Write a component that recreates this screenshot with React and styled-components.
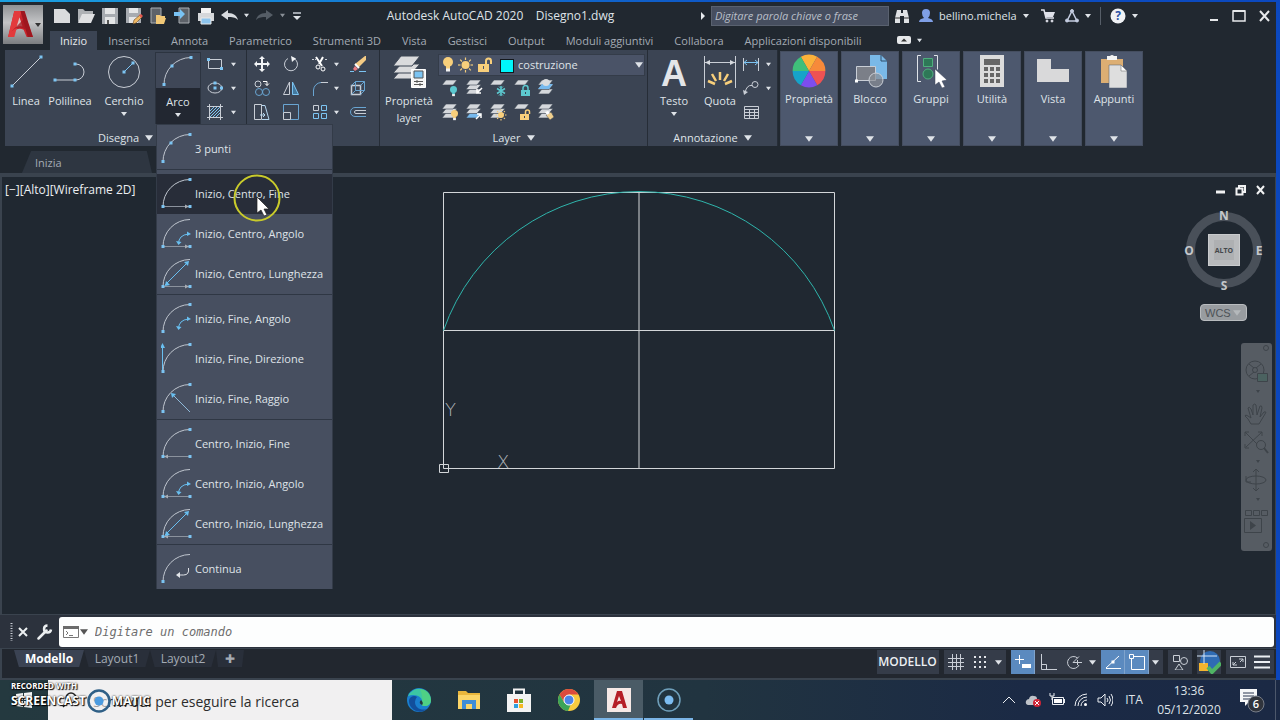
import React from 'react';
import styled, { createGlobalStyle, css, ThemeProvider } from 'styled-components';

const theme = {
  windowColor: '#212830',
  canvasColor: '#202831',
  panelColor: '#3b4453',
  collapsedColor: '#4d586e',
  menuColor: '#474f60',
  darkColor: '#222731',
  textColor: '#dfe3e8',
  mutedColor: '#a4abb4',
  lineColor: '#3a434e',
  accentColor: '#5b8abf',
};

const GlobalStyle = createGlobalStyle`
  * {
    box-sizing: border-box;
  }

  body {
    margin: 0;
    background: #212830;
    color: #dfe3e8;
    font-family: 'Open Sans', 'Noto Sans', sans-serif;
    font-size: 11px;
    line-height: 16px;
  }

  button, input, select {
    margin: 0;
    padding: 0;
    border: 0;
    background: none;
    color: inherit;
    font: inherit;
  }

  svg {
    display: block;
    flex: none;
  }
`;

const Screen = styled.div`
  display: flex;
  flex-direction: column;
  min-height: 100vh;
`;

const AppWindow = styled.div`
  display: flex;
  flex: 1;
  flex-direction: column;
  border-top: 2px solid #1689d4;
  border-right: 4px solid #0b46bd;
  border-image: linear-gradient(100deg, #1ba0e0, #0d52c4 55%, #0b46bd) 2 4 0 0;
  background: ${props => props.theme.windowColor};
`;

/* Header */

const Header = styled.header`
  display: grid;
  grid-template-columns: 40px 1fr;
  grid-template-rows: 29px 19px;
  column-gap: 7px;
  padding-left: 3px;
`;

const LogoButton = styled.button`
  display: flex;
  grid-row: 1 / 3;
  align-items: center;
  height: 39px;
  margin-top: 3px;
  padding-left: 3px;
  background: linear-gradient(#8f9194, #c3c4c6 45%, #7b7d80);
`;

const TitleBar = styled.div`
  display: flex;
  align-items: center;
  height: 27px;
`;

const Slot = styled.button`
  display: flex;
  flex: none;
  align-items: center;
  justify-content: center;
  width: ${props => props.$w || 24}px;
  height: 22px;
  color: ${props => props.theme.textColor};
`;

const Title = styled.h1`
  flex: 1;
  margin: 0;
  font-size: 12px;
  font-weight: 400;
  text-align: center;
  white-space: pre;
`;

const HelpSearch = styled.input`
  width: 178px;
  height: 20px;
  padding: 0 3px;
  border: 1px solid #59616f;
  background: #464e5f;

  &::placeholder {
    color: #b9bfc8;
    font-style: italic;
    opacity: 1;
  }
`;

const UserName = styled.span`
  flex: none;
  width: 80px;
  margin-left: 2px;
  white-space: nowrap;
`;

const Divider = styled.span`
  width: 1px;
  height: 18px;
  margin: 0 5px;
  background: #565e68;
`;

const WindowButtons = styled.div`
  display: flex;
  margin-left: 61px;
`;

const RibbonTabs = styled.nav`
  display: flex;
  align-items: stretch;
  gap: 1px;
`;

const RibbonTab = styled.button`
  padding: 0 10px;
  color: ${props => (props.$active ? '#e8ebee' : props.theme.mutedColor)};
  background: ${props => (props.$active ? props.theme.panelColor : 'none')};
  white-space: nowrap;
`;

const RibbonToggle = styled.div`
  display: flex;
  align-items: center;
  margin-left: 18px;
`;

/* Ribbon */

const Ribbon = styled.div`
  display: flex;
  height: 96px;
  padding-left: 5px;
`;

const Panel = styled.section`
  display: flex;
  flex-direction: column;
  justify-content: space-between;
  width: ${props => props.$w}px;
  border-right: 1px solid #262d37;
  background: ${props => props.theme.panelColor};
`;

const PanelBody = styled.div`
  display: flex;
  align-items: flex-start;
  padding-top: 2px;
`;

const PanelTitle = styled.button`
  display: flex;
  align-items: center;
  justify-content: center;
  gap: 6px;
  height: 16px;
`;

const largeButton = css`
  display: flex;
  flex-direction: column;
  align-items: center;
  padding-top: 2px;
`;

const LargeButton = styled.button`
  ${largeButton}
  width: ${props => props.$w}px;
  height: 72px;
  ${props =>
    props.$open &&
    css`
      border: 1px solid #2c3440;
      border-bottom: 0;
      background: linear-gradient(#3f4757 35px, ${props.theme.darkColor} 35px);
    `}
`;

const LargeIcon = styled.span`
  display: flex;
  align-items: center;
  justify-content: center;
  width: 36px;
  height: 34px;
`;

const LargeLabel = styled.span`
  margin: 4px 0 2px;
  line-height: 17px;
  white-space: pre-line;
`;

const MenuAnchor = styled.div`
  position: relative;
`;

const SmallTools = styled.div`
  display: grid;
  grid-template-columns: ${props => props.$columns};
  grid-auto-rows: 24px;
  padding-left: ${props => props.$pad || 0}px;
`;

const SmallButton = styled.button`
  display: flex;
  align-items: center;
  justify-content: center;
`;

const LayerTools = styled.div`
  flex: 1;
  padding: 2px 2px 0 0;
`;

const LayerSelect = styled.label`
  display: flex;
  align-items: center;
  gap: 3px;
  height: 22px;
  padding: 0 1px 0 3px;
  border: 1px solid #343c49;
  background: #4a5367;
`;

const LayerField = styled.select`
  flex: 1;
  min-width: 0;
  appearance: none;
`;

const Swatch = styled.span`
  width: 14px;
  height: 14px;
  margin: 2px 1px 0 4px;
  border: 1px solid #14181d;
  background: #00f6fa;
`;

const CollapsedPanels = styled.div`
  display: flex;
  gap: 3px;
  padding: 1px 0 0 2px;
`;

const CollapsedPanel = styled.button`
  ${largeButton}
  width: 58px;
  height: 95px;
  border: 1px solid #454e60;
  background: ${props => props.theme.collapsedColor};

  ${LargeLabel} {
    flex: 1;
    margin: 2px 0;
  }

  & > svg:last-child {
    margin-bottom: 2px;
  }
`;

/* Arc menu */

const Menu = styled.div`
  position: absolute;
  z-index: 5;
  top: 72px;
  left: 1px;
  width: 177px;
  padding-top: 4px;
  border: 1px solid #333b48;
  border-bottom: 0;
  background: ${props => props.theme.menuColor};
`;

const MenuGroup = styled.div`
  & + & {
    padding-top: 4px;
    border-top: 1px solid #2f3744;
  }
`;

const MenuItem = styled.button`
  position: relative;
  display: flex;
  align-items: center;
  gap: 2px;
  width: 100%;
  height: 40px;
  padding-left: 4px;
  background: ${props => (props.$hover ? '#282d39' : 'none')};
  white-space: nowrap;
`;

const Pointer = styled.span`
  position: absolute;
  top: -1px;
  left: 75px;
`;

/* Drawing area */

const FileTabs = styled.div`
  display: flex;
  align-items: flex-end;
  height: 31px;
  padding-left: 22px;
  border-bottom: 4px solid ${props => props.theme.lineColor};
`;

const FileTab = styled.button`
  width: 130px;
  height: 22px;
  padding: 2px 0 0 13px;
  background: #2e3641;
  clip-path: polygon(7% 0, 96% 0, 100% 100%, 0 100%);
  color: ${props => props.theme.mutedColor};
  text-align: left;
`;

const Canvas = styled.main`
  position: relative;
  flex: 1;
  min-height: 438px;
  border: solid ${props => props.theme.lineColor};
  border-width: 0 1px 1px 2px;
  background: ${props => props.theme.canvasColor};
`;

const ViewLabel = styled.div`
  padding: 5px 3px;
  color: #eceff1;
  font-size: 12px;
`;

const Drawing = styled.svg`
  position: absolute;
  top: 8px;
  left: 433px;
`;

const ViewControls = styled.div`
  position: absolute;
  top: 2px;
  right: 5px;
  display: flex;
`;

const ViewCube = styled.div`
  position: absolute;
  top: 30px;
  right: 11px;
`;

const WcsSelect = styled.button`
  position: absolute;
  top: 127px;
  right: 28px;
  display: flex;
  align-items: center;
  justify-content: space-between;
  width: 47px;
  height: 17px;
  padding: 0 5px 0 4px;
  border: 1px solid #b9bcbf;
  border-radius: 4px;
  background: #989ca0;
  color: #4d5257;
  font-family: 'Liberation Sans', sans-serif;
`;

const NavBar = styled.div`
  position: absolute;
  top: 166px;
  right: 3px;
  border-radius: 3px;
  background: #565c63;
`;

/* Command line and status */

const CommandBar = styled.div`
  display: flex;
  align-items: center;
  height: 33px;
  padding: 0 2px 0 10px;
  background: #2c323d;
`;

const CommandBox = styled.label`
  display: flex;
  flex: 1;
  align-items: center;
  height: 30px;
  margin-left: 2px;
  padding-left: 4px;
  border-radius: 3px;
  background: #fdfefe;
`;

const CommandInput = styled.input`
  flex: 1;
  height: 28px;
  margin-left: 6px;
  color: #333;
  font-family: 'DejaVu Sans Mono', monospace;
  font-size: 12px;
  outline: 0;

  &::placeholder {
    color: #6d6d6d;
    font-style: italic;
    opacity: 1;
  }
`;

const StatusBar = styled.footer`
  display: flex;
  justify-content: space-between;
  height: 32px;
  padding: 1px 2px 0 12px;
  border: solid ${props => props.theme.lineColor};
  border-width: 1px 0 2px 2px;
  background: #22272f;
  font-size: 12px;
`;

const LayoutTabs = styled.div`
  display: flex;
`;

const LayoutTab = styled.button`
  width: ${props => props.$w || 66}px;
  height: 17px;
  background: ${props => (props.$active ? '#3b4353' : '#292f3a')};
  clip-path: polygon(0 0, 100% 0, 93% 100%, 7% 100%);
  color: ${props => (props.$active ? '#fff' : props.theme.mutedColor)};
  font-weight: ${props => (props.$active ? 700 : 400)};
`;

const StatusTools = styled.div`
  display: flex;
  gap: 5px;
`;

const StatusGroup = styled.div`
  display: flex;
  height: 24px;
  background: #353c49;
`;

const StatusButton = styled.button`
  display: flex;
  align-items: center;
  justify-content: center;
  width: ${props => props.$w || 24}px;
  border-right: 1px solid ${props => (props.$on ? '#7fa3cc' : 'transparent')};
  background: ${props => (props.$on ? props.theme.accentColor : 'none')};
  color: #eceff3;
  font-weight: 600;
`;

/* Taskbar */

const Taskbar = styled.div`
  position: relative;
  display: flex;
  height: 40px;
  background: linear-gradient(90deg, #24393f, #213440 55%, #1b2a45 80%, #1b2944);
  font-size: 12px;
`;

const StartButton = styled.button`
  display: flex;
  align-items: center;
  justify-content: center;
  width: 48px;
`;

const TaskSearch = styled.label`
  display: flex;
  align-items: center;
  width: 344px;
  padding-left: 14px;
  background: #f1f0f1;
`;

const TaskSearchInput = styled.input`
  flex: 1;
  height: 36px;
  margin-left: 13px;
  padding-top: 2px;
  color: #222;
  font-size: 14px;

  &::placeholder {
    color: #2c2c2c;
    opacity: 1;
  }
`;

const TaskApps = styled.div`
  display: flex;
  flex: 1;
  gap: 1px;
  padding-left: 2px;
`;

const TaskApp = styled.button`
  display: flex;
  align-items: center;
  justify-content: center;
  width: 49px;
  border-bottom: 2px solid ${props => (props.$running ? '#7ab4e6' : 'transparent')};
  border-top: 2px solid transparent;
  background: ${props => (props.$active ? '#4a5b66' : 'none')};
`;

const Tray = styled.div`
  display: flex;
  align-items: center;
  padding-right: 4px;
`;

const Clock = styled.time`
  width: 76px;
  line-height: 19px;
  text-align: center;
`;

const DesktopEdge = styled.span`
  align-self: stretch;
  width: 1px;
  background: #4d586b;
`;

const Watermark = styled.div`
  position: absolute;
  top: 1px;
  left: 11px;
  color: #fff;
  font-size: 8px;
  font-weight: 700;
  line-height: 9px;
  text-shadow: 0 0 2px #000, 1px 1px 1px #000;
  pointer-events: none;
`;

const WatermarkBrand = styled.div`
  display: flex;
  align-items: center;
  height: 22px;
  font-size: 12px;
  line-height: 16px;
`;

/* Icons */

const Caret = ({ size = 6, color = '#dfe3e8' }) => (
  <svg width={size} height={size} viewBox="0 0 6 6">
    <path d="M0 1h6L3 5z" fill={color} />
  </svg>
);

const Icon = ({ s = 16, w, h, box, children, c = '#c9ced6' }) => (
  <svg
    width={w || s}
    height={h || s}
    viewBox={box || `0 0 ${w || s} ${h || s}`}
    fill="none"
    stroke={c}
    strokeWidth="1"
  >
    {children}
  </svg>
);

const Dots = ({ points, r = 1.5, fill = '#7cc4f2' }) =>
  points.map(([x, y]) => (
    <rect key={`${x}-${y}`} x={x - r} y={y - r} width={r * 2} height={r * 2} fill={fill} stroke="none" />
  ));

const AutocadMark = ({ size }) => (
  <svg width={size} height={size} viewBox="0 0 26 28">
    <path d="M1 26 7 1h9l9 25h-6l-3-7q-5-2-9 1l-1 6z" fill="#c9242c" />
    <path d="M7 1h7L7 26H1z" fill="#e33a3c" />
    <path d="M12 7 9 17q3-2 6-1z" fill="#dcc3c2" />
    <path d="M4 21 16 9l2 10Q11 14 4 21z" fill="#a3151d" opacity=".75" />
    <path d="M13 1h4l8 25h-5z" fill="#9e161e" />
  </svg>
);

const quick = {
  Nuovo: <path d="M1 2h11l5 5v9H1z" fill="#dadbdd" stroke="none" />,
  Apri: (
    <>
      <path d="M1 15V2h5l2 2h8v3" fill="#aeb1b5" stroke="none" />
      <path d="M1 16 5 7h13l-4 9z" fill="#dfe0e2" stroke="none" />
    </>
  ),
  Salva: (
    <>
      <path d="M1 1h16v16H1z" fill="#a7abb1" stroke="none" />
      <path d="M4 1h10v6H4zM4 10h10v7H4z" fill="#e4e5e7" stroke="none" />
      <path d="M6 13h2v4H6z" fill="#555" stroke="none" />
    </>
  ),
  'Salva con nome': (
    <>
      <path d="M1 1h15v15H1z" fill="#a7abb1" stroke="none" />
      <path d="M4 1h9v5H4zM4 10h9v6H4z" fill="#e4e5e7" stroke="none" />
      <path d="m8 17 1-4 6-5 2 2-6 6z" fill="#f0b964" stroke="#63411f" strokeWidth=".6" />
      <path d="m14 8 2-1 2 2-2 2z" fill="#e4574e" stroke="none" />
    </>
  ),
  'Apri da Web e dispositivi mobili': (
    <>
      <path d="M2 1h10v15H2z" fill="#5d6269" stroke="#a9adb2" />
      <path d="M7 17V8h4l1 1h4v2h1l-2 6z" fill="#f1c877" stroke="none" />
    </>
  ),
  'Salva in Web e dispositivi mobili': (
    <>
      <path d="M6 1h10v15H6z" fill="#5d6269" stroke="#a9adb2" />
      <path d="M1 5h6V2l5 5-5 5V9H1z" fill="#79c3f4" stroke="none" />
    </>
  ),
  Plot: (
    <>
      <path d="M4 1h10v5H4z" fill="#f2f2f2" stroke="none" />
      <path d="M1 6h16v8H1z" fill="#d5d7da" stroke="none" />
      <path d="M4 11h10v6H4z" fill="#8dc5ee" stroke="#e8e8e8" />
    </>
  ),
};

const UndoIcon = ({ flip, color }) => (
  <svg width="17" height="14" viewBox="0 0 17 14">
    <g transform={flip ? 'translate(17) scale(-1 1)' : undefined}>
      <path d="m0 6 7-5v3c6 0 9 3 10 7-3-3-6-3-10-3v3z" fill={color} />
    </g>
  </svg>
);

const LayerStack = ({ small, children, blue }) => (
  <Icon s={18}>
    <g fill="#d5d8dc" stroke="#3b4453" strokeWidth=".6">
      {!small && <path d="m1 15 4-5h11l-4 5z" fill={blue ? '#76b9ee' : undefined} />}
      {!small && <path d="m1 10.500 4-5h11l-4 5z" />}
      <path d="m1 6 4-5h11l-4 5z" />
    </g>
    {children}
  </Icon>
);

const Bulb = ({ x = 0, y = 0, color, s = 1 }) => (
  <g transform={`translate(${x} ${y}) scale(${s})`} stroke="none">
    <circle cx="5" cy="5" r="5" fill={color} />
    <path d="M3 9h4v3H3z" fill={color} />
    <path d="M3 11.500h4v3H3z" fill="#f3f3f3" />
  </g>
);

const Sun = ({ x = 8, y = 8, r = 4, rays = 7.5 }) => (
  <g stroke="#f4ce7c" strokeWidth="1.200">
    <circle cx={x} cy={y} r={r} fill="#f8cf7b" stroke="none" />
    {[0, 45, 90, 135, 180, 225, 270, 315].map(a => (
      <path key={a} d={`M${x + r + 1} ${y}H${x + rays}`} transform={`rotate(${a} ${x} ${y})`} />
    ))}
  </g>
);

const Lock = ({ x = 0, y = 0, color, open }) => (
  <g transform={`translate(${x} ${y})`}>
    <path d="M0 5h9v6H0z" fill={color} stroke="none" />
    <path
      d={open ? 'M5.500 5V3a2 2 0 0 1 4 0v2' : 'M2 5V3a2.500 2.500 0 0 1 5 0v2'}
      stroke={color}
      strokeWidth="1.500"
    />
    <path d="M4 7h1v2H4z" fill="#3b4453" stroke="none" />
  </g>
);

const layerIcons = [
  <LayerStack small>
    <Bulb x={9} y={7} s={0.7} color="#5cc8cf" />
  </LayerStack>,
  <LayerStack>
    <path d="m17 9-5 5m0-4v4h4" stroke="#fff" strokeWidth="1.500" />
  </LayerStack>,
  <LayerStack small>
    <path d="M12 7v10M8 9.500l8 5M16 9.500l-8 5" stroke="#5cc8cf" strokeWidth="1.500" />
    <path d="m10 7.500 2 2 2-2M10 16.500l2-2 2 2" stroke="#5cc8cf" />
  </LayerStack>,
  <LayerStack small>
    <Lock x={8} y={6} color="#5cc8cf" />
  </LayerStack>,
  <LayerStack>
    <path d="m1 10 4-5h11l-4 5z" fill="#76b9ee" stroke="none" />
    <circle cx="9" cy="3.500" r="3.500" fill="#dadcdf" stroke="none" />
  </LayerStack>,
  <LayerStack>
    <Bulb x={10} y={7} s={0.7} color="#f8cf7b" />
  </LayerStack>,
  <LayerStack blue>
    <path d="m11 16 5-5m-4 0h4v4" stroke="#fff" strokeWidth="1.500" />
  </LayerStack>,
  <LayerStack>
    <Sun x={12} y={12} r={3} rays={5.5} />
  </LayerStack>,
  <LayerStack small>
    <Lock x={7} y={6} color="#f8cf7b" open />
  </LayerStack>,
  <LayerStack>
    <path d="m9 12 5-3 3 5-4 3z" fill="#f1d08e" stroke="#3b4453" strokeWidth=".5" />
    <path d="m8 9 3-1 2 2-3 2z" fill="#fff" stroke="none" />
  </LayerStack>,
];

const drawIcons = [
  <Icon>
    <path d="M1.500 3.500h13v9h-13z" />
    <Dots points={[[1.5, 3.5], [14.5, 12.5]]} />
  </Icon>,
  <Icon>
    <ellipse cx="8" cy="8" rx="7" ry="5" />
    <Dots points={[[8, 8], [8, 3], [14.5, 8]]} />
  </Icon>,
  <Icon>
    <path d="M0 2.500h16M0 13.500h16M2.500 0v16M13.500 0v16" />
    <path d="m3 7 4-4M3 10l7-7M3 13l10-10M6 13l7-7M9 13l4-4" stroke="#7cc4f2" />
  </Icon>,
];

const modifyIcons = [
  <Icon c="#f2f4f6">
    <path d="M8 2v12M2 8h12" strokeWidth="2" />
    <path d="m8 0 3 3H5zM8 16l-3-3h6zM0 8l3-3v6zM16 8l-3 3V5z" fill="#f2f4f6" stroke="none" />
  </Icon>,
  <Icon>
    <path d="M5 2.500A6.500 6.500 0 1 0 11 2.500" />
    <path d="m8 0 5 2.500L9 6z" fill="#f2f4f6" stroke="none" />
  </Icon>,
  <Icon>
    <path d="M0 3.500h4M13 3.500h3" strokeDasharray="2 1" />
    <path d="m4 1 6 9M11 1 7 8" stroke="#fff" strokeWidth="2" />
    <circle cx="6" cy="11" r="2" stroke="#fff" />
    <circle cx="11" cy="13" r="2" stroke="#fff" />
  </Icon>,
  <Icon>
    <path d="M0 15.500h4M9 15.500h7" stroke="#7cc4f2" />
    <path d="M15 0h1v4l-7 7-4-3z" fill="#f4cb84" stroke="none" />
    <path d="m5 10-2 3 2 2 3-2z" fill="#ea7d83" stroke="none" />
    <path d="m5 8 4 4" stroke="#fff" strokeWidth="2" />
  </Icon>,
  <Icon>
    <circle cx="4" cy="4" r="3" />
    <circle cx="5" cy="12" r="3.500" stroke="#69a5d2" />
    <circle cx="12" cy="12" r="3.500" stroke="#69a5d2" />
    <path d="M9 1.500h4v4m-2-2 2 2 2-2" stroke="#fff" />
  </Icon>,
  <Icon>
    <path d="M6.500 2v12.500H.5z" />
    <path d="M9.500 2v12.500h6z" fill="#43799f" stroke="#7cc4f2" />
  </Icon>,
  <Icon>
    <path d="M1.500 16V10A8 8 0 0 1 9 2.500" stroke="#69a5d2" />
    <path d="M9 2.500h7" />
  </Icon>,
  <Icon>
    <path d="M1.500 5.500h9v9h-9z" strokeWidth="1.500" />
    <path d="m1.500 5.500 4-4h9v9l-4 4M10.500 5.500l4-4M5.500 1.500v9h9M1.500 14.500l4-4" stroke="#69a5d2" />
  </Icon>,
  <Icon>
    <path d="M.5 .5h7v15h-7z" />
    <path d="M8 1.500h3l4 14H8M6 11h5m-2-2 2 2-2 2" stroke="#b4d6ef" />
  </Icon>,
  <Icon>
    <path d="M.5 8.500v-8h15v15h-8" stroke="#69a5d2" />
    <path d="M.5 8.500h7v7h-7z" />
  </Icon>,
  <Icon>
    <path d="M1.500 1.500h5v5h-5z" />
    <path d="M9.500 1.500h5v5h-5zM1.500 9.500h5v5h-5zM9.500 9.500h5v5h-5z" stroke="#7cc4f2" />
  </Icon>,
  <Icon>
    <path d="M16 3.500H5a4.500 4.500 0 0 0 0 9h11" stroke="#69a5d2" />
    <path d="M16 6.500H6a1.500 1.500 0 0 0 0 3h10" />
  </Icon>,
];

const annotateIcons = [
  <Icon>
    <path d="M.5 2v13M15.500 2v13" />
    <path d="M1 6.500h14M4 4 1 6.500 4 9M12 4l3 2.500L12 9" stroke="#7cc4f2" />
  </Icon>,
  <Icon>
    <circle cx="12" cy="4.500" r="3" />
    <path d="M9 5.500q-5-1-7 7" />
    <path d="m0 10 1 5 4-3z" fill="#c9ced6" stroke="none" />
  </Icon>,
  <Icon>
    <path d="M1.500 2.500h14v12h-14zM1.500 5.500h14M1.500 8.500h14M1.500 11.500h14M6.500 5.500v9M11.500 5.500v9" />
  </Icon>,
];

const LineIcon = () => (
  <Icon s={34}>
    <path d="M3 32 32 3" />
    <Dots points={[[3, 32], [32, 3]]} />
  </Icon>
);

const PolylineIcon = () => (
  <Icon s={34}>
    <path d="M2 26h21a8 8 0 0 0 0-16" />
    <Dots points={[[2, 26], [22, 26], [22, 10]]} />
  </Icon>
);

const CircleIcon = () => (
  <Icon s={34}>
    <circle cx="17" cy="18" r="15.500" />
    <path d="m17 18 9-9" stroke="#7cc4f2" />
    <Dots points={[[17, 18], [26, 9]]} />
  </Icon>
);

// `variant` adds the construction geometry that each arc method needs
const ArcIcon = ({ variant }) => {
  const base = /[cC]/.test(variant[0]);
  return (
    <Icon s={32} c="#bfc5ce">
      <path d="M2 29A27 27 0 0 1 29 1.500" />
      {base && <path d="M2 28.500h27" stroke="#8b929d" />}
      {variant[0] === 'c' && <path d="m24 26.500 4 2-4 2z" fill="#a6abb3" stroke="none" />}
      {variant[0] === 'C' && <path d="m7 26.500-4 2 4 2z" fill="#a6abb3" stroke="none" />}
      {variant.includes('A') && (
        <g stroke="#69bff0">
          <path d="M17.500 26q0-9 10-10" />
          <path d="m15 23 2.500 4 3-3zM26 13.500l4 2.500-4 2z" fill="#69bff0" stroke="none" />
        </g>
      )}
      {variant.includes('L') && (
        <g stroke="#69bff0">
          <path d="M4 27 27 4" />
          <path d="m4 28 1-5 4 4zM28 3l-1 5-4-4z" fill="#69bff0" stroke="none" />
        </g>
      )}
      {variant.includes('D') && (
        <g stroke="#69bff0">
          <path d="M1.500 29V3" />
          <path d="M1.500 0 4 5h-5z" fill="#69bff0" stroke="none" />
        </g>
      )}
      {variant.includes('R') && (
        <g stroke="#8fb9d8">
          <path d="m29 29-18-18" />
          <path d="m10 10 5 1-4 4z" fill="#69bff0" stroke="none" />
        </g>
      )}
      {variant.includes('K') && (
        <g stroke="#e3e6ea">
          <path d="M27.500 15q1 7-5 7h-5" />
          <path d="m15 22 4-3v6z" fill="#e3e6ea" stroke="none" />
        </g>
      )}
      <Dots points={[[2, 28.5]]} />
      {variant.includes('e') && <Dots points={[[29, 1.5]]} />}
      {variant.includes('m') && <Dots points={[[10, 10]]} />}
      {base && <Dots points={[[29, 28.5]]} />}
    </Icon>
  );
};

const LayerPropsIcon = () => (
  <Icon s={34}>
    <g fill="#dadbdd" stroke="#3b4453">
      <path d="m1 25 8-9h19l-8 9z" />
      <path d="m1 19 8-9h19l-8 9z" />
      <path d="m1 12 8-10h19l-8 10z" />
    </g>
    <path d="M19.500 15.500h14v18h-14z" fill="#f5f5f5" stroke="#fff" />
    <path d="M22 17h9v7h-9z" fill="#7cc4f2" stroke="#555" />
    <path d="M22 27.500h9M22 30.500h9M25 26v3M28 29v3" stroke="#555" />
  </Icon>
);

const TextIcon = () => (
  <Icon w={34} h={48}>
    <text x="17" y="39" textAnchor="middle" fill="#e3e5e8" stroke="none" fontFamily="Liberation Sans" fontWeight="700" fontSize="36">
      A
    </text>
  </Icon>
);

const DimensionIcon = () => (
  <Icon s={34}>
    <path d="M1.500 2v32M32.500 2v32M2 8.500h30" />
    <path d="m2 8.500 5-2.500v5zM32 8.500 27 6v5z" fill="#d5d9de" stroke="none" />
    <path d="M17 18v8M9 20l4 7M25 20l-4 7M5 27l7 3M29 27l-7 3" stroke="#f8cf7b" strokeWidth="2.500" />
  </Icon>
);

const wheel = ['#fbb13a', '#f78a3a', '#ee5253', '#7d4dee', '#16a3c9', '#3fbf7a'];

const WheelIcon = () => (
  <svg width="34" height="34" viewBox="-17 -17 34 34">
    {wheel.map((color, i) => (
      <path key={color} d="M0 0-8.200-14.200A16.400 16.400 0 0 1 8.200-14.200z" fill={color} transform={`rotate(${i * 60})`} />
    ))}
  </svg>
);

const BlockIcon = () => (
  <Icon s={34}>
    <path d="M17 1h11l6 6v18H17z" fill="#7ab9e8" stroke="none" />
    <path d="M28 1v6h6" stroke="#2f4f6d" />
    <path d="M3.500 12.500h19v14h-19z" fill="#7b7f88" stroke="#c9ced6" />
    <circle cx="23" cy="26" r="7" fill="#8a8e96" fillOpacity=".7" />
    <Dots points={[[3.5, 27]]} fill="#fff" />
  </Icon>
);

const GroupIcon = () => (
  <Icon s={34} c="#dfe3e8">
    <path d="M7 1.500H3.500v26H7M20 1.500h3.500v14" />
    <path d="M9.500 4.500h9v8h-9z" fill="#2e7857" stroke="#4fae7e" />
    <circle cx="14" cy="20" r="5" fill="#2e7857" stroke="#4fae7e" />
    <path d="m21 15 12 11-5 1 3 6-3 1-3-6-4 3z" fill="#fff" stroke="#3c4558" strokeWidth=".5" />
  </Icon>
);

const CalculatorIcon = () => (
  <Icon s={34}>
    <path d="M5 1h24v32H5z" fill="#dcdcdc" stroke="none" />
    <path d="M9 5h16v6H9z" fill="#666" stroke="none" />
    <Dots points={[[11, 15], [17, 15], [23, 15], [11, 21], [17, 21], [23, 21], [11, 27], [17, 27], [23, 27]]} r={2} fill="#666" />
  </Icon>
);

const ViewIcon = () => (
  <Icon s={34}>
    <path d="M1 5h14v10h18v13H1z" fill="#d9d9da" stroke="none" />
  </Icon>
);

const ClipboardIcon = () => (
  <Icon s={34}>
    <path d="M4 5h22v24H4z" fill="#dcae73" stroke="none" />
    <path d="M10 2h3q2-2 4 0h3v4H10z" fill="#f4f4f4" stroke="none" />
    <path d="M12 11h12l6 6v17H12z" fill="#dedede" stroke="#4d586e" strokeWidth=".5" />
    <path d="M24 11v6h6z" fill="#fff" stroke="#777" strokeWidth=".6" />
  </Icon>
);

const NavIcons = () => (
  <Icon w={31} h={208} c="#3e444a">
    <circle cx="25" cy="5" r="2.500" />
    <circle cx="14" cy="27" r="9" />
    <circle cx="14" cy="27" r="2.500" />
    <path d="m8 21 5 4M20 21l-5 4M8 33l5-4" />
    <path d="M16.500 30.500h10v8h-10z" fill="#4b6260" />
    <path d="M15 47h4l-2 3zM15 117h4l-2 3zM15 155h4l-2 3z" fill="#3e444a" stroke="none" />
    <path d="M10 81q-3-6-6-8 0-2 3 0l3 2-3-10q1-2 3 1l2 6v-10q2-2 3 0l1 10 3-9q2-1 2 2l-2 9 4-5q3-1 1 2l-6 10z" />
    <path d="m4 89 17 17M21 89 5 104M4 93v-4h4M17 89h4v4M4 101v4h4" />
    <circle cx="20" cy="102" r="4.500" fill="#565c63" />
    <path d="m23 105 4 5" strokeWidth="2" />
    <ellipse cx="15" cy="137" rx="10" ry="4" />
    <path d="M15 126v22m-3-3 3 3 3-3m-6-16 3-3 3 3M5 133v6h5" />
    <path d="M4.500 167.500h6v5h-6zM12.500 167.500h6v5h-6zM20.500 167.500h6v5h-6zM3.500 175.500h17v14h-17z" />
    <path d="m9 178 6 4.500-6 4.500z" fill="#3e444a" stroke="none" />
    <circle cx="25" cy="202" r="2.500" />
  </Icon>
);

const arcMethods = [
  [['3 punti', '-em']],
  [
    ['Inizio, Centro, Fine', 'ce'],
    ['Inizio, Centro, Angolo', 'cA'],
    ['Inizio, Centro, Lunghezza', 'cL'],
  ],
  [
    ['Inizio, Fine, Angolo', '-eA'],
    ['Inizio, Fine, Direzione', '-eD'],
    ['Inizio, Fine, Raggio', '-eR'],
  ],
  [
    ['Centro, Inizio, Fine', 'Ce'],
    ['Centro, Inizio, Angolo', 'CA'],
    ['Centro, Inizio, Lunghezza', 'CL'],
  ],
  [['Continua', '-K']],
];

const ribbonTabs = [
  'Inizio',
  'Inserisci',
  'Annota',
  'Parametrico',
  'Strumenti 3D',
  'Vista',
  'Gestisci',
  'Output',
  'Moduli aggiuntivi',
  'Collabora',
  'Applicazioni disponibili',
];

const collapsedPanels = [
  ['Proprietà', WheelIcon],
  ['Blocco', BlockIcon],
  ['Gruppi', GroupIcon],
  ['Utilità', CalculatorIcon],
  ['Vista', ViewIcon],
  ['Appunti', ClipboardIcon],
];

const Large = ({ label, icon, w, caret, open }) => (
  <LargeButton $w={w} $open={open}>
    <LargeIcon>{icon}</LargeIcon>
    <LargeLabel>{label}</LargeLabel>
    {caret && <Caret />}
  </LargeButton>
);

const Tool = ({ icon, label }) => <SmallButton aria-label={label}>{icon}</SmallButton>;

const ArcMenu = () => (
  <Menu role="menu">
    {arcMethods.map(group => (
      <MenuGroup key={group[0][0]}>
        {group.map(([label, variant]) => (
          <MenuItem key={label} role="menuitem" $hover={variant === 'ce'}>
            <ArcIcon variant={variant} />
            {label}
            {variant === 'ce' && (
              <Pointer>
                <svg width="50" height="50" viewBox="0 0 50 50">
                  <circle cx="25" cy="25" r="22.500" fill="none" stroke="#c9cb2b" strokeWidth="2" />
                  <path d="M25 24v16l4-3 3 6 3-1-3-6h5z" fill="#fff" stroke="#222" strokeWidth=".7" />
                </svg>
              </Pointer>
            )}
          </MenuItem>
        ))}
      </MenuGroup>
    ))}
  </Menu>
);

const AppHeader = () => (
  <Header>
    <LogoButton aria-label="Menu applicazione">
      <AutocadMark size={29} />
      <Caret size={6} color="#333" />
    </LogoButton>
    <TitleBar>
      {Object.entries(quick).map(([label, icon]) => (
        <Slot key={label} aria-label={label}>
          <Icon s={18}>{icon}</Icon>
        </Slot>
      ))}
      <Slot $w={22} aria-label="Annulla">
        <UndoIcon color="#d9dce0" />
      </Slot>
      <Slot $w={12} aria-label="Elenco annulla">
        <Caret size={5} />
      </Slot>
      <Slot aria-label="Ripeti">
        <UndoIcon flip color="#555d66" />
      </Slot>
      <Slot $w={12} aria-label="Elenco ripeti">
        <Caret size={5} color="#8a9097" />
      </Slot>
      <Slot $w={18} aria-label="Personalizza">
        <Icon s={10}>
          <path d="M1 2h8" strokeWidth="1.500" />
          <path d="M1 5h8L5 9z" fill="#dfe3e8" stroke="none" />
        </Icon>
      </Slot>
      <Title>{'Autodesk AutoCAD 2020    Disegno1.dwg'}</Title>
      <Slot $w={16} aria-label="Comprimi">
        <Icon s={8}>
          <path d="M2 0v8l4-4z" fill="#e8ebee" stroke="none" />
        </Icon>
      </Slot>
      <HelpSearch aria-label="Ricerca" placeholder="Digitare parola chiave o frase" />
      <Slot $w={26} aria-label="Cerca">
        <Icon s={16}>
          <path d="M3 2h4v3h2V2h4l2 8v5h-5V8H6v7H1v-5z" fill="#dfe1e4" stroke="none" />
          <path d="M1 10h5M10 10h5" stroke="#333" />
        </Icon>
      </Slot>
      <Slot $w={22} aria-label="Account">
        <Icon s={16}>
          <path d="M8 1q4 0 4 4 0 3-2 5 5 1 5 4H1q0-3 5-4-2-2-2-5 0-4 4-4z" fill="#7f9fe6" stroke="none" />
        </Icon>
      </Slot>
      <UserName>bellino.michela</UserName>
      <Slot $w={14} aria-label="Opzioni account">
        <Caret />
      </Slot>
      <Slot $w={30} aria-label="App Store">
        <Icon s={16} c="#dfe1ea">
          <path d="M1 2h3l2 8h8" strokeWidth="1.500" />
          <path d="M4 4h11l-2 5H6z" fill="#dfe1ea" stroke="none" />
          <circle cx="7" cy="13" r="1" fill="#dfe1ea" />
          <circle cx="12" cy="13" r="1" fill="#dfe1ea" />
        </Icon>
      </Slot>
      <Slot $w={18} aria-label="Autodesk App">
        <Icon s={16} c="#c3cbdf">
          <path d="m8 3 5 10H3z" strokeWidth="1.500" />
          <circle cx="8" cy="3" r="1.500" fill="#c3cbdf" />
          <circle cx="3" cy="12.500" r="1.500" fill="#c3cbdf" />
          <circle cx="13" cy="12.500" r="1.500" fill="#c3cbdf" />
        </Icon>
      </Slot>
      <Slot $w={14} aria-label="Opzioni app">
        <Caret />
      </Slot>
      <Divider />
      <Slot aria-label="Guida">
        <Icon s={16}>
          <circle cx="8" cy="8" r="7.500" fill="#f0f2f5" stroke="none" />
          <text x="8" y="12" textAnchor="middle" fill="#2c53a8" stroke="none" fontSize="12" fontWeight="700">
            ?
          </text>
        </Icon>
      </Slot>
      <Slot $w={10} aria-label="Opzioni guida">
        <Caret />
      </Slot>
      <WindowButtons>
        <Slot $w={25} aria-label="Riduci a icona">
          <Icon c="#e6e8ea">
            <path d="M4 12h8" strokeWidth="2" />
          </Icon>
        </Slot>
        <Slot $w={25} aria-label="Ingrandisci">
          <Icon c="#e6e8ea">
            <path d="M2 3h12v10H2z" strokeWidth="1.500" />
            <path d="M2 3h12" strokeWidth="2" />
          </Icon>
        </Slot>
        <Slot $w={25} aria-label="Chiudi">
          <Icon c="#e6e8ea">
            <path d="m4 3 9 10M13 3 4 13" strokeWidth="2" />
          </Icon>
        </Slot>
      </WindowButtons>
    </TitleBar>
    <RibbonTabs>
      {ribbonTabs.map((tab, i) => (
        <RibbonTab key={tab} $active={i === 0}>
          {tab}
        </RibbonTab>
      ))}
      <RibbonToggle>
        <Slot $w={26} aria-label="Riduci barra multifunzione">
          <Icon w={14} h={12}>
            <rect x="0" y="1" width="14" height="8" rx="2" fill="#e6e8ea" stroke="none" />
            <path d="M4 6.500 7 3.500l3 3z" fill="#333" stroke="none" />
          </Icon>
        </Slot>
        <Slot $w={6} aria-label="Opzioni barra multifunzione">
          <Caret size={5} />
        </Slot>
      </RibbonToggle>
    </RibbonTabs>
  </Header>
);

const AppRibbon = () => (
  <Ribbon>
    <Panel $w={242}>
      <PanelBody>
        <Large label="Linea" icon={<LineIcon />} w={42} />
        <Large label="Polilinea" icon={<PolylineIcon />} w={46} />
        <Large label="Cerchio" icon={<CircleIcon />} w={62} caret />
        <MenuAnchor>
          <Large label="Arco" icon={<ArcIcon variant="-em" />} w={46} caret open />
          <ArcMenu />
        </MenuAnchor>
        <SmallTools $columns="24px 12px" $pad={2}>
          {drawIcons.map((icon, i) => (
            <React.Fragment key={i}>
              <Tool icon={icon} label={['Rettangolo', 'Ellisse', 'Tratteggio'][i]} />
              <Tool icon={<Caret size={5} />} label="Altre opzioni" />
            </React.Fragment>
          ))}
        </SmallTools>
      </PanelBody>
      <PanelTitle>
        Disegna <Caret size={8} />
      </PanelTitle>
    </Panel>
    <Panel $w={133}>
      <PanelBody>
        <SmallTools $columns="29px 29px 29px 4px 40px">
          {modifyIcons.map((icon, i) => (
            <React.Fragment key={i}>
              {i % 4 === 3 && <Tool icon={<Caret size={5} />} label="Altre opzioni" />}
              <Tool icon={icon} label={`Modifica ${i + 1}`} />
            </React.Fragment>
          ))}
        </SmallTools>
      </PanelBody>
    </Panel>
    <Panel $w={268}>
      <PanelBody>
        <Large label={'Proprietà\nlayer'} icon={<LayerPropsIcon />} w={58} />
        <LayerTools>
          <LayerSelect>
            <Icon w={12} h={16}>
              <Bulb x={1} color="#f8cf7b" />
            </Icon>
            <Icon w={17} h={16}>
              <Sun x={8.5} />
            </Icon>
            <Icon w={16} h={16}>
              <path d="M9 7V4a2.500 2.500 0 0 1 5 0v3" stroke="#f8cf7b" strokeWidth="2" />
              <path d="M1 7h11v8H1z" fill="#f8cf7b" stroke="none" />
              <path d="M6 9h1v3H6z" fill="#4a5367" stroke="none" />
            </Icon>
            <Swatch />
            <LayerField aria-label="Layer">
              <option>costruzione</option>
            </LayerField>
            <Caret size={8} />
          </LayerSelect>
          <SmallTools $columns="repeat(5, 24px)">
            {layerIcons.map((icon, i) => (
              <Tool key={i} icon={icon} label={`Layer ${i + 1}`} />
            ))}
          </SmallTools>
        </LayerTools>
      </PanelBody>
      <PanelTitle>
        Layer <Caret size={8} />
      </PanelTitle>
    </Panel>
    <Panel $w={130}>
      <PanelBody>
        <Large label="Testo" icon={<TextIcon />} w={52} caret />
        <Large label="Quota" icon={<DimensionIcon />} w={40} />
        <SmallTools $columns="22px 12px">
          {annotateIcons.map((icon, i) => (
            <React.Fragment key={i}>
              <Tool icon={icon} label={['Lineare', 'Direttrice', 'Tabella'][i]} />
              {i < 2 && <Tool icon={<Caret size={5} />} label="Altre opzioni" />}
            </React.Fragment>
          ))}
        </SmallTools>
      </PanelBody>
      <PanelTitle>
        Annotazione <Caret size={8} />
      </PanelTitle>
    </Panel>
    <CollapsedPanels>
      {collapsedPanels.map(([label, PanelIcon]) => (
        <CollapsedPanel key={label}>
          <PanelIcon />
          <LargeLabel>{label}</LargeLabel>
          <Caret size={8} />
        </CollapsedPanel>
      ))}
    </CollapsedPanels>
  </Ribbon>
);

const compass = [['N', 40, 12], ['S', 40, 82], ['O', 5, 47], ['E', 75, 47]];

const DrawingArea = () => (
  <Canvas>
    <ViewLabel>[−][Alto][Wireframe 2D]</ViewLabel>
    <Drawing width="410" height="290" viewBox="435 185 410 290" fill="none" stroke="#d3d6d9">
      <path d="M443.500 192.500h391v276h-391zM639 192v276M443 330.500h391" />
      <path d="M443.500 330.500A207 207 0 0 1 834.500 330.500" stroke="#2fb5ac" />
      <path d="M439.500 464.500h9v8h-9z" />
      <g fill="#aeb3b8" stroke="none" fontFamily="DejaVu Sans" fontWeight="200" fontSize="18">
        <text x="445" y="416">
          Y
        </text>
        <text x="497" y="468">
          X
        </text>
      </g>
    </Drawing>
    <ViewControls>
      {[
        ['Riduci a icona', <path d="M4 10h9" strokeWidth="3" />],
        ['Ripristina', <path d="M4.500 6.500h6v6h-6zM7 6V4h6v6h-2" strokeWidth="2" />],
        ['Chiudi', <path d="m5 4 7 8M12 4l-7 8" strokeWidth="2" />],
      ].map(([label, shape]) => (
        <Slot key={label} $w={20} aria-label={label}>
          <Icon c="#f1f2f3">{shape}</Icon>
        </Slot>
      ))}
    </ViewControls>
    <ViewCube>
      <svg width="80" height="88" viewBox="0 0 80 88">
        <circle cx="40" cy="43" r="33.500" fill="none" stroke="#495059" strokeWidth="9" />
        <rect x="24.500" y="27.500" width="31" height="31" fill="#b9bbbd" stroke="#c9cbcd" />
        <rect x="30" y="33" width="20" height="20" fill="#aeb0b2" />
        <g fill="#c4c7ca" fontFamily="Open Sans" fontSize="12" fontWeight="700" textAnchor="middle">
          {compass.map(([letter, x, y]) => (
            <text key={letter} x={x} y={y + 1}>
              {letter}
            </text>
          ))}
          <text x="40" y="46" fill="#44484c" fontSize="7">
            ALTO
          </text>
        </g>
      </svg>
    </ViewCube>
    <WcsSelect>
      WCS <Caret size={8} color="#b4b8bb" />
    </WcsSelect>
    <NavBar aria-label="Barra di navigazione">
      <NavIcons />
    </NavBar>
  </Canvas>
);

const statusIcons = {
  grid: <path d="M4.500 0v16M8.500 0v16M12.500 0v16M0 4.500h16M0 8.500h16M0 12.500h16" />,
  snap: <Dots points={[[3, 3], [8, 3], [13, 3], [3, 8], [8, 8], [13, 8], [3, 13], [8, 13], [13, 13]]} r={1} fill="#e2e5e9" />,
  dynamic: (
    <>
      <path d="M0 5.500h9M4.500 1v9" stroke="#fff" />
      <path d="M7 10h9v4H7z" fill="#fff" stroke="none" />
    </>
  ),
  ortho: <path d="M.5 0v15.500H16M.5 10.500h5v5" />,
  polar: (
    <>
      <path d="M11.500 4A6 6 0 1 0 13 11" />
      <path d="M7 8.500h9M7 8.500l6-6M11.500 6v5" />
    </>
  ),
  track: (
    <>
      <path d="M1 14.500h15M1 14 14 2" stroke="#fff" />
      <Dots points={[[8, 8]]} fill="#fff" />
    </>
  ),
  osnap: (
    <>
      <path d="M2.500 2.500h13v13h-13z" stroke="#fff" />
      <path d="M.5.500h4v4h-4z" fill="#5b8abf" stroke="#fff" />
    </>
  ),
  shapes: (
    <>
      <path d="M1.500 1.500h6v6h-6zM7 10l4 6H3z" />
      <circle cx="12" cy="7" r="3.500" />
    </>
  ),
  full: <path d="M.5 2.500h15v11H.5zM3 8v3h4M3 11l3-3M13 8V5H9M13 5l-3 3" />,
  menu: <path d="M0 2.500h16M0 8h16M0 13.500h16" strokeWidth="2" stroke="#eceff3" />,
};

const Status = ({ icon, w, on }) => (
  <StatusButton $w={w} $on={on} aria-label={icon}>
    {icon ? <Icon>{statusIcons[icon]}</Icon> : <Caret size={7} />}
  </StatusButton>
);

const BottomBars = () => (
  <>
    <CommandBar>
      <Icon w={3} h={18}>
        <path d="M1.500 0v18" strokeWidth="2" strokeDasharray="1 1.500" />
      </Icon>
      <Slot $w={20} aria-label="Chiudi riga di comando">
        <Icon s={12} c="#eceff1">
          <path d="m2 2 8 8M10 2l-8 8" strokeWidth="2" />
        </Icon>
      </Slot>
      <Slot aria-label="Personalizza riga di comando">
        <Icon s={16}>
          <path d="m1.500 14.500 8-8" stroke="#eceff1" strokeWidth="2.500" strokeLinecap="round" />
          <path d="M14 5.500a3.500 3.500 0 1 1-3.500-4" stroke="#eceff1" strokeWidth="2.500" />
        </Icon>
      </Slot>
      <CommandBox>
        <Icon c="#777">
          <path d="M.5 2.500h15v11H.5z" />
          <path d="M0 2h16v3H0z" fill="#6b6b6b" stroke="none" />
          <path d="m3 7 2 2-2 2M6 11.500h4" />
        </Icon>
        <Slot as="span" $w={10}>
          <Caret size={8} color="#555" />
        </Slot>
        <CommandInput aria-label="Riga di comando" placeholder="Digitare un comando" />
      </CommandBox>
    </CommandBar>
    <StatusBar>
      <LayoutTabs>
        <LayoutTab $active $w={70}>
          Modello
        </LayoutTab>
        <LayoutTab>Layout1</LayoutTab>
        <LayoutTab>Layout2</LayoutTab>
        <LayoutTab $w={28}>✚</LayoutTab>
      </LayoutTabs>
      <StatusTools>
        <StatusGroup>
          <StatusButton $w={62}>MODELLO</StatusButton>
        </StatusGroup>
        <StatusGroup>
          <Status icon="grid" />
          <Status icon="snap" />
          <Status w={14} />
        </StatusGroup>
        <StatusGroup>
          <Status icon="dynamic" on />
          <Status icon="ortho" w={28} />
          <Status icon="polar" w={22} />
          <Status w={16} />
          <Status icon="track" on />
          <Status icon="osnap" on />
          <Status w={14} />
        </StatusGroup>
        <StatusGroup>
          <Status icon="shapes" />
        </StatusGroup>
        <StatusGroup>
          <StatusButton aria-label="Prestazioni grafiche">
            <Icon s={24}>
              <circle cx="13" cy="11" r="10" fill="#2f6bb3" stroke="none" />
              <path d="M2 13h9v8H2z" fill="#f3b52f" stroke="none" />
              <path d="M7 0v14M0 6h20" stroke="#d3e4f7" />
              <path d="m11 17 4 5 9-9" stroke="#4fb464" strokeWidth="4" />
            </Icon>
          </StatusButton>
        </StatusGroup>
        <StatusGroup>
          <Status icon="full" />
          <Status icon="menu" />
        </StatusGroup>
      </StatusTools>
    </StatusBar>
  </>
);

const taskApps = [
  [
    'Microsoft Edge',
    <Icon s={24}>
      <circle cx="12" cy="12" r="12" fill="#1a7fce" stroke="none" />
      <path d="M1 8A12 12 0 0 1 24 12c0 4-3 6-6 6-4 0-4-2-3-4 1-5-7-9-14-6z" fill="#3cc7a3" stroke="none" />
      <path d="M13 1c7 0 11 5 11 11 0 4-3 6-6 6-4 0-4-2-3-4 1-3 0-8-2-13z" fill="#5bd672" stroke="none" opacity=".6" />
      <path d="M8 14c0 6 6 9 12 7-9 7-19-1-18-9 1-4 6-5 8-3q-2 2-2 5z" fill="#124f9c" stroke="none" />
      <path d="M14 12q3 3 1 5-4-2-1-5z" fill="#22363f" stroke="none" />
    </Icon>,
  ],
  [
    'Esplora file',
    <Icon w={22} h={20}>
      <path d="M0 1h8l2 2h12v16H0z" fill="#e9b63c" stroke="none" />
      <path d="M0 5h22v14H0z" fill="#fbd568" stroke="none" />
      <path d="M4 19v-9h14v9h-4v-5H8v5z" fill="#3f8dd6" stroke="none" />
    </Icon>,
  ],
  [
    'Microsoft Store',
    <Icon s={24}>
      <path d="M7 7V1.500h10V7" stroke="#f3f3f3" strokeWidth="2" />
      <path d="M0 6h24v18H0z" fill="#f3f3f3" stroke="none" />
      <path d="M7 11h4v4H7z" fill="#e8532f" stroke="none" />
      <path d="M12 11h4v4h-4z" fill="#7cb42c" stroke="none" />
      <path d="M7 16h4v4H7z" fill="#2c9fe0" stroke="none" />
      <path d="M12 16h4v4h-4z" fill="#f5b923" stroke="none" />
    </Icon>,
  ],
  [
    'Google Chrome',
    <Icon s={22}>
      <circle cx="11" cy="11" r="11" fill="#f7cb3f" stroke="none" />
      <path d="M1.500 5.500A11 11 0 0 1 20.500 5.500H11L6 13z" fill="#dc4b3e" stroke="none" />
      <path d="M1.500 5.500 6.500 14l6 2L10 22A11 11 0 0 1 1.500 5.500z" fill="#3ba458" stroke="none" />
      <circle cx="11" cy="11" r="5" fill="#4c85e8" stroke="#fff" />
    </Icon>,
  ],
  [
    'AutoCAD 2020',
    <Icon s={24}>
      <path d="M0 0h24v24H0z" fill="#f6e9e6" stroke="none" />
      <path d="m5 20 5-17h5l5 17h-4l-1-4q-4-1-6 4z" fill="#b51f27" stroke="none" />
      <path d="m12 8-2 6q2-2 4-1z" fill="#f6e9e6" stroke="none" />
    </Icon>,
    true,
    true,
  ],
  [
    'Screencast-O-Matic',
    <Icon s={24}>
      <circle cx="12" cy="12" r="11" stroke="#6f9fba" strokeWidth="1.500" />
      <circle cx="12" cy="12" r="4.500" fill="#7cbcf0" stroke="none" />
    </Icon>,
    true,
  ],
];

const trayIcons = {
  'Icone nascoste': <path d="m2 11 6-6 6 6" />,
  OneDrive: (
    <>
      <path d="M3 13q-3-1-2-4 1-2 3-2 1-4 5-3 3 0 3 3 3 0 3 3v3z" fill="#bfc3c9" stroke="none" />
      <circle cx="12" cy="11" r="4" fill="#cf2436" stroke="none" />
      <path d="m10 9 4 4m0-4-4 4" stroke="#fff" />
    </>
  ),
  Batteria: (
    <>
      <path d="M3.500 5.500h11v7h-11zM15.500 7v4" />
      <path d="M5 7h8v4H5z" fill="#fff" stroke="none" />
      <path d="M1 1v3h4V1M3 4v4" />
    </>
  ),
  'Wi-Fi': (
    <>
      <path d="M2 14A12 12 0 0 1 14 2M5 14a9 9 0 0 1 9-9M8 14a6 6 0 0 1 6-6" />
      <circle cx="12.500" cy="12.500" r="1.500" fill="#fff" stroke="none" />
    </>
  ),
  Volume: <path d="M1 6h3l4-4v12l-4-4H1zM10 6q2 2 0 4M12 4q3 4 0 8M14 2q4 6 0 12" />,
};

const BottomTaskbar = () => (
  <Taskbar>
    <StartButton aria-label="Start">
      <Icon s={16}>
        <path d="m0 2 7-1v7H0zM8 1l8-1v8H8zM0 9h7v6l-7-1zM8 9h8v7l-8-1z" fill="#f2f4f5" stroke="none" />
      </Icon>
    </StartButton>
    <TaskSearch>
      <Icon s={18} c="#222">
        <circle cx="9" cy="7" r="5" strokeWidth="1.500" />
        <path d="m6 11-5 5" strokeWidth="1.500" />
      </Icon>
      <TaskSearchInput aria-label="Ricerca Windows" placeholder="Scrivi qui per eseguire la ricerca" />
    </TaskSearch>
    <TaskApps>
      {taskApps.map(([label, icon, running, active]) => (
        <TaskApp key={label} aria-label={label} $running={running} $active={active}>
          {icon}
        </TaskApp>
      ))}
    </TaskApps>
    <Tray>
      {Object.entries(trayIcons).map(([label, icon]) => (
        <Slot key={label} aria-label={label}>
          <Icon c="#eceff3">{icon}</Icon>
        </Slot>
      ))}
      <Slot $w={34}>ITA</Slot>
      <Clock>
        13:36
        <br />
        05/12/2020
      </Clock>
      <Slot $w={48} aria-label="Notifiche">
        <Icon w={28} h={26}>
          <path d="M3 2h17v13H12l-4 4v-4H3z" fill="#f6f7f8" stroke="none" />
          <path d="M6 6h11M6 9h11M6 12h7" stroke="#2a3650" />
          <circle cx="19" cy="17" r="8" fill="#30343c" stroke="#777d88" />
          <text x="19" y="21" textAnchor="middle" fill="#fff" stroke="none" fontSize="11" fontWeight="600">
            6
          </text>
        </Icon>
      </Slot>
      <DesktopEdge />
    </Tray>
    <Watermark>
      RECORDED WITH
      <WatermarkBrand>
        SCREENCAST
        <Icon s={26}>
          <circle cx="13" cy="13" r="10.500" fill="#f1f0f1" fillOpacity=".6" stroke="#2f5f86" strokeWidth="2.500" />
          <circle cx="13" cy="13" r="4.500" fill="#4b9be0" stroke="none" />
        </Icon>
        MATIC
      </WatermarkBrand>
    </Watermark>
  </Taskbar>
);

const App = () => (
  <ThemeProvider theme={theme}>
    <GlobalStyle />
    <Screen>
      <AppWindow>
        <AppHeader />
        <AppRibbon />
        <FileTabs>
          <FileTab>Inizia</FileTab>
        </FileTabs>
        <DrawingArea />
        <BottomBars />
      </AppWindow>
      <BottomTaskbar />
    </Screen>
  </ThemeProvider>
);

export default App;
